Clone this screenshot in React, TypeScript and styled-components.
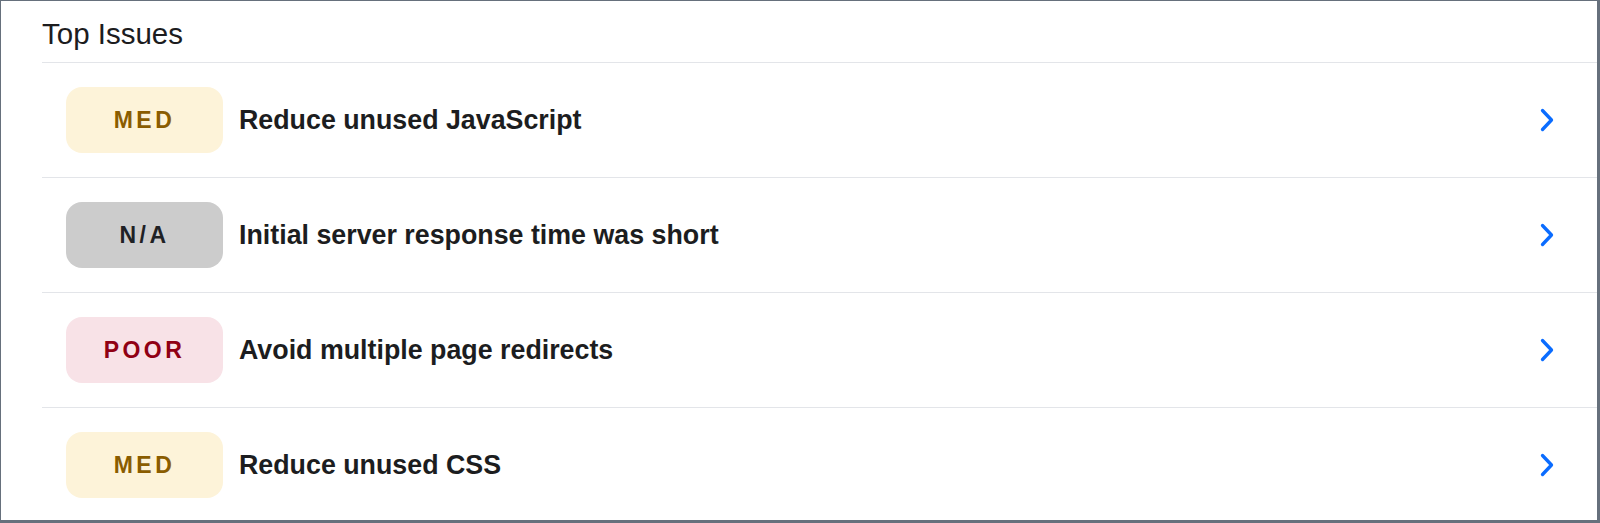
import { createGlobalStyle, styled } from "styled-components";

// DATA
type Level = "med" | "na" | "poor";

type Issue = {
  level: Level;
  label: string;
  title: string;
};

const issues: Issue[] = [
  { level: "med", label: "MED", title: "Reduce unused JavaScript" },
  { level: "na", label: "N/A", title: "Initial server response time was short" },
  { level: "poor", label: "POOR", title: "Avoid multiple page redirects" },
  { level: "med", label: "MED", title: "Reduce unused CSS" },
];

const badgeColors: Record<Level, { bg: string; fg: string }> = {
  med: { bg: "#fdf3d9", fg: "#8a5c00" },
  na: { bg: "#cccccc", fg: "#1f2124" },
  poor: { bg: "#f8e2e7", fg: "#900014" },
};

// STYLE
const GlobalStyle = createGlobalStyle`
  html, body {
    margin: 0;
    padding: 0;
    background: #ffffff;
  }
  body {
    font-family: "Liberation Sans", Arial, sans-serif;
    color: #1c1d20;
  }
`;

const Frame = styled.section`
  box-sizing: border-box;
  width: 1600px;
  height: 523px;
  overflow: hidden;
  background: #ffffff;
  border: 1px solid #66707c;
  border-right-width: 3px;
  border-bottom-width: 3px;
  display: flex;
  flex-direction: column;
`;

const Title = styled.h2`
  margin: 0;
  padding: 16px 0 11px 41px;
  font-size: 29.5px;
  line-height: 34px;
  font-weight: 400;
  color: #1c1c1e;
`;

const List = styled.ul`
  list-style: none;
  margin: 0 0 0 41px;
  padding: 0;
  display: flex;
  flex-direction: column;
`;

const Row = styled.li`
  display: flex;
  align-items: center;
  gap: 16px;
  height: 114px;
  padding: 0 43px 0 24px;
  border-top: 1px solid #e3e5e9;
  cursor: pointer;
`;

const Badge = styled.span<{ $level: Level }>`
  flex: none;
  display: flex;
  align-items: center;
  justify-content: center;
  width: 157px;
  height: 66px;
  padding-top: 1px;
  box-sizing: border-box;
  border-radius: 16px;
  background: ${(p) => badgeColors[p.$level].bg};
  color: ${(p) => badgeColors[p.$level].fg};
  font-size: 23px;
  font-weight: 700;
  letter-spacing: 3.5px;
`;

const IssueTitle = styled.span`
  flex: 1;
  font-size: 26.8px;
  font-weight: 700;
  color: #1c1d20;
`;

const Chevron = () => (
  <svg width="14" height="24" viewBox="0 0 14 24" fill="none">
    <polyline
      points="2.5,2.5 11.5,12 2.5,21.5"
      stroke="#0a6cff"
      strokeWidth="3.3"
      strokeLinecap="round"
      strokeLinejoin="round"
    />
  </svg>
);

function App() {
  return (
    <>
      <GlobalStyle />
      <Frame>
        <Title>Top Issues</Title>
        <List>
          {issues.map((issue, i) => (
            <Row key={i}>
              <Badge $level={issue.level}>{issue.label}</Badge>
              <IssueTitle>{issue.title}</IssueTitle>
              <Chevron />
            </Row>
          ))}
        </List>
      </Frame>
    </>
  );
}

export default App;
